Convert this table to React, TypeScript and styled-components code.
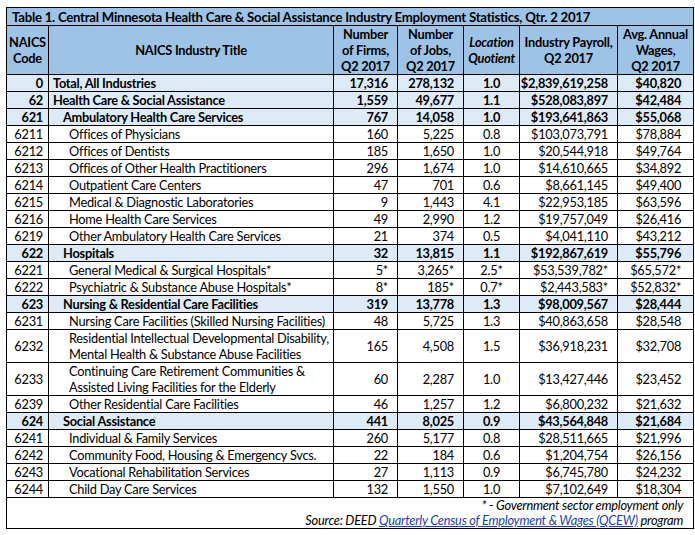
import React from "react";
import styled, { createGlobalStyle } from "styled-components";

const GlobalStyle = createGlobalStyle`
  html, body { margin: 0; padding: 0; background: #ffffff; }
  body { font-family: Lato, "Open Sans", sans-serif; color: #000; }
`;

const Page = styled.div`
  padding: 7px 0 0 6px;
`;

const Table = styled.table`
  border-collapse: collapse;
  table-layout: fixed;
  width: 687px;
  font-size: 12.8px;
  letter-spacing: -0.25px;
  line-height: 16px;
  border: 1px solid #000;
`;

const TitleCell = styled.td`
  background: #9dc3e6;
  font-weight: 700;
  font-size: 13.2px;
  letter-spacing: -0.25px;
  height: 17px;
  padding: 0 0 0 5px;
  border: 1px solid #000;
  white-space: nowrap;
`;

const HeadCell = styled.th<{ $italic?: boolean }>`
  background: #9dc3e6;
  font-weight: 700;
  font-style: ${(p) => (p.$italic ? "italic" : "normal")};
  text-align: center;
  vertical-align: middle;
  white-space: nowrap;
  border: 1px solid #000;
  padding: 0;
  height: 48px;
`;

const Row = styled.tr<{ $hl?: boolean; $tall?: boolean }>`
  height: ${(p) => (p.$tall ? 33 : 17)}px;
  background: ${(p) => (p.$hl ? "#ddebf7" : "#ffffff")};
  font-weight: ${(p) => (p.$hl ? 700 : 400)};
`;

const Cell = styled.td<{ $align?: "left" | "right" | "center"; $pr?: number; $pl?: number }>`
  border: 1px solid #000;
  padding: 0 ${(p) => p.$pr ?? 0}px 0 ${(p) => p.$pl ?? 0}px;
  text-align: ${(p) => p.$align ?? "right"};
  vertical-align: middle;
  white-space: nowrap;
  overflow: hidden;
`;

const FootCell = styled.td`
  border: 1px solid #000;
  height: 30px;
  padding: 0 10px 0 0;
  text-align: right;
  vertical-align: middle;
  font-style: italic;
  line-height: 15px;
`;

const FootLine = styled.div``;

const SourceLink = styled.a`
  color: #1a3fc4;
  text-decoration: underline;
`;

type Item = {
  code: string;
  title: string | string[];
  level: 0 | 1 | 2;
  firms: string;
  jobs: string;
  lq: string;
  payroll: string;
  wages: string;
  hl?: boolean;
};

const rows: Item[] = [
  { code: "0", title: "Total, All Industries", level: 0, firms: "17,316", jobs: "278,132", lq: "1.0", payroll: "$2,839,619,258", wages: "$40,820", hl: true },
  { code: "62", title: "Health Care & Social Assistance", level: 0, firms: "1,559", jobs: "49,677", lq: "1.1", payroll: "$528,083,897", wages: "$42,484", hl: true },
  { code: "621", title: "Ambulatory Health Care Services", level: 1, firms: "767", jobs: "14,058", lq: "1.0", payroll: "$193,641,863", wages: "$55,068", hl: true },
  { code: "6211", title: "Offices of Physicians", level: 2, firms: "160", jobs: "5,225", lq: "0.8", payroll: "$103,073,791", wages: "$78,884" },
  { code: "6212", title: "Offices of Dentists", level: 2, firms: "185", jobs: "1,650", lq: "1.0", payroll: "$20,544,918", wages: "$49,764" },
  { code: "6213", title: "Offices of Other Health Practitioners", level: 2, firms: "296", jobs: "1,674", lq: "1.0", payroll: "$14,610,665", wages: "$34,892" },
  { code: "6214", title: "Outpatient Care Centers", level: 2, firms: "47", jobs: "701", lq: "0.6", payroll: "$8,661,145", wages: "$49,400" },
  { code: "6215", title: "Medical & Diagnostic Laboratories", level: 2, firms: "9", jobs: "1,443", lq: "4.1", payroll: "$22,953,185", wages: "$63,596" },
  { code: "6216", title: "Home Health Care Services", level: 2, firms: "49", jobs: "2,990", lq: "1.2", payroll: "$19,757,049", wages: "$26,416" },
  { code: "6219", title: "Other Ambulatory Health Care Services", level: 2, firms: "21", jobs: "374", lq: "0.5", payroll: "$4,041,110", wages: "$43,212" },
  { code: "622", title: "Hospitals", level: 1, firms: "32", jobs: "13,815", lq: "1.1", payroll: "$192,867,619", wages: "$55,796", hl: true },
  { code: "6221", title: "General Medical & Surgical Hospitals*", level: 2, firms: "5*", jobs: "3,265*", lq: "2.5*", payroll: "$53,539,782*", wages: "$65,572*" },
  { code: "6222", title: "Psychiatric & Substance Abuse Hospitals*", level: 2, firms: "8*", jobs: "185*", lq: "0.7*", payroll: "$2,443,583*", wages: "$52,832*" },
  { code: "623", title: "Nursing & Residential Care Facilities", level: 1, firms: "319", jobs: "13,778", lq: "1.3", payroll: "$98,009,567", wages: "$28,444", hl: true },
  { code: "6231", title: "Nursing Care Facilities (Skilled Nursing Facilities)", level: 2, firms: "48", jobs: "5,725", lq: "1.3", payroll: "$40,863,658", wages: "$28,548" },
  { code: "6232", title: ["Residential Intellectual Developmental Disability,", "Mental Health & Substance Abuse Facilities"], level: 2, firms: "165", jobs: "4,508", lq: "1.5", payroll: "$36,918,231", wages: "$32,708" },
  { code: "6233", title: ["Continuing Care Retirement Communities &", "Assisted Living Facilities for the Elderly"], level: 2, firms: "60", jobs: "2,287", lq: "1.0", payroll: "$13,427,446", wages: "$23,452" },
  { code: "6239", title: "Other Residential Care Facilities", level: 2, firms: "46", jobs: "1,257", lq: "1.2", payroll: "$6,800,232", wages: "$21,632" },
  { code: "624", title: "Social Assistance", level: 1, firms: "441", jobs: "8,025", lq: "0.9", payroll: "$43,564,848", wages: "$21,684", hl: true },
  { code: "6241", title: "Individual & Family Services", level: 2, firms: "260", jobs: "5,177", lq: "0.8", payroll: "$28,511,665", wages: "$21,996" },
  { code: "6242", title: "Community Food, Housing & Emergency Svcs.", level: 2, firms: "22", jobs: "184", lq: "0.6", payroll: "$1,204,754", wages: "$26,156" },
  { code: "6243", title: "Vocational Rehabilitation Services", level: 2, firms: "27", jobs: "1,113", lq: "0.9", payroll: "$6,745,780", wages: "$24,232" },
  { code: "6244", title: "Child Day Care Services", level: 2, firms: "132", jobs: "1,550", lq: "1.0", payroll: "$7,102,649", wages: "$18,304" },
];

const indent = [4, 14, 20];
const colWidths = [42, 285, 64, 66, 56, 98, 76];

export default function App() {
  return (
    <Page>
      <GlobalStyle />
      <Table>
        <colgroup>
          {colWidths.map((w, i) => (
            <col key={i} style={{ width: w }} />
          ))}
        </colgroup>
        <thead>
          <tr>
            <TitleCell colSpan={7}>
              Table 1. Central Minnesota Health Care &amp; Social Assistance Industry Employment Statistics, Qtr. 2 2017
            </TitleCell>
          </tr>
          <tr>
            <HeadCell>NAICS<br />Code</HeadCell>
            <HeadCell>NAICS Industry Title</HeadCell>
            <HeadCell>Number<br />of Firms,<br />Q2 2017</HeadCell>
            <HeadCell>Number<br />of Jobs,<br />Q2 2017</HeadCell>
            <HeadCell $italic>Location<br />Quotient</HeadCell>
            <HeadCell>Industry Payroll,<br />Q2 2017</HeadCell>
            <HeadCell>Avg. Annual<br />Wages,<br />Q2 2017</HeadCell>
          </tr>
        </thead>
        <tbody>
          {rows.map((r) => {
            const tall = Array.isArray(r.title);
            return (
              <Row key={r.code} $hl={r.hl} $tall={tall}>
                <Cell $pr={5}>{r.code}</Cell>
                <Cell $align="left" $pl={indent[r.level]}>
                  {Array.isArray(r.title) ? (
                    <>
                      {r.title[0]}
                      <br />
                      {r.title[1]}
                    </>
                  ) : (
                    r.title
                  )}
                </Cell>
                <Cell $pr={9}>{r.firms}</Cell>
                <Cell $pr={9}>{r.jobs}</Cell>
                <Cell $align="center">{r.lq}</Cell>
                <Cell $pr={9}>{r.payroll}</Cell>
                <Cell $pr={12}>{r.wages}</Cell>
              </Row>
            );
          })}
        </tbody>
        <tfoot>
          <tr>
            <FootCell colSpan={7}>
              <FootLine>* - Government sector employment only</FootLine>
              <FootLine>
                Source: DEED <SourceLink href="#">Quarterly Census of Employment &amp; Wages (QCEW)</SourceLink> program
              </FootLine>
            </FootCell>
          </tr>
        </tfoot>
      </Table>
    </Page>
  );
}
